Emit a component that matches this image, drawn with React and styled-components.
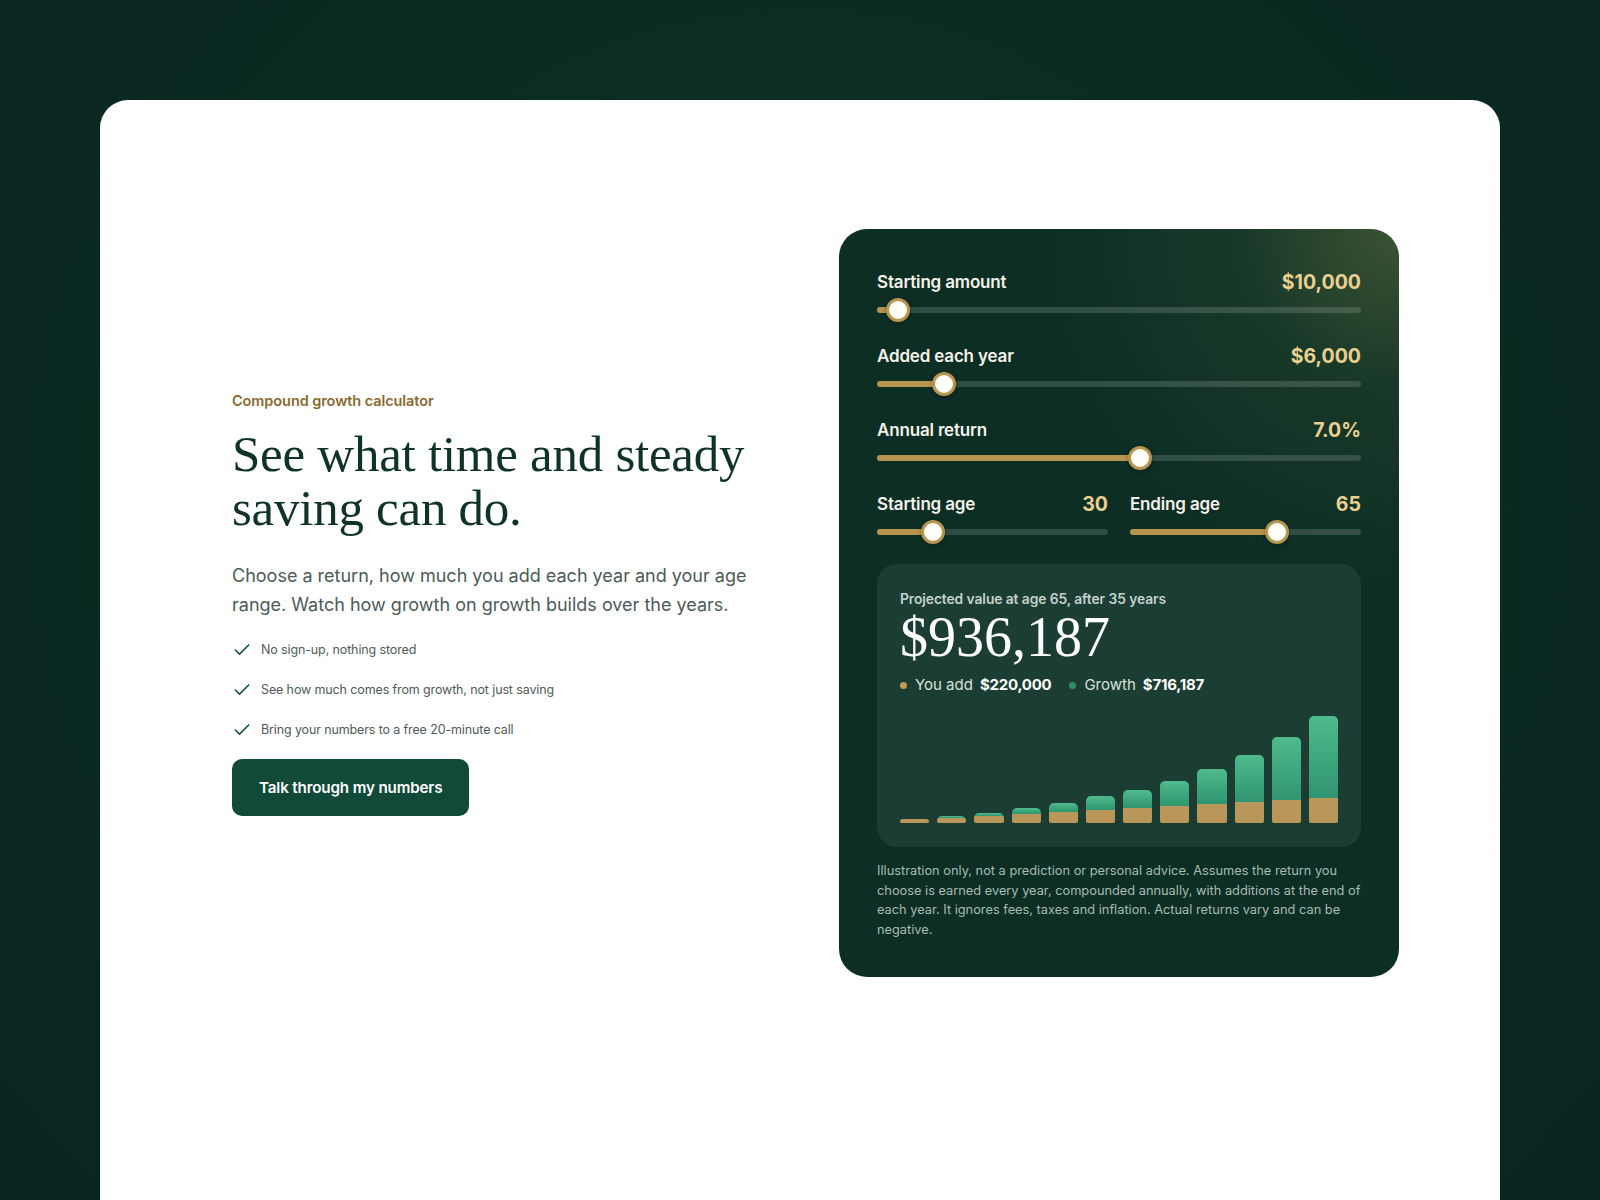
import React, { useState } from "react";
import styled, { createGlobalStyle } from "styled-components";
import { Check } from "lucide-react";

const GlobalStyle = createGlobalStyle`
  * { box-sizing: border-box; }
  html, body { margin: 0; padding: 0; }
  body {
    background: radial-gradient(ellipse at 50% 40%, #0e3027 0%, #0b2a22 60%, #092520 100%);
    min-height: 100vh;
    font-family: Inter, "Noto Sans", sans-serif;
    -webkit-font-smoothing: antialiased;
  }
`;

const Page = styled.div`
  padding: 100px 100px 0;
  min-height: 100vh;
  overflow: hidden;
`;

const Card = styled.main`
  background: #ffffff;
  border-radius: 28px 28px 0 0;
  min-height: 1160px;
  padding: 129px 0 0 132px;
  display: grid;
  grid-template-columns: 520px 560px;
  column-gap: 87px;
  align-items: center;
  align-content: start;
`;

const Intro = styled.section`
  display: flex;
  flex-direction: column;
`;

const Eyebrow = styled.div`
  font-size: 14.5px;
  line-height: 20px;
  font-weight: 600;
  color: #8a6a2f;
  letter-spacing: -0.005em;
`;

const Headline = styled.h1`
  margin: 16px 0 0;
  font-family: "Liberation Serif", "DejaVu Serif", serif;
  font-weight: 400;
  font-size: 51px;
  line-height: 54px;
  color: #0f3328;
  letter-spacing: -0.005em;
`;

const Lead = styled.p`
  margin: 26px 0 0;
  font-size: 18px;
  line-height: 29px;
  color: #4b5b56;
`;

const Perks = styled.ul`
  list-style: none;
  margin: 21px 0 0;
  padding: 0;
  display: flex;
  flex-direction: column;
  gap: 20px;
`;

const Perk = styled.li`
  display: flex;
  align-items: center;
  gap: 9px;
  font-size: 12.5px;
  line-height: 20px;
  color: #4f5b57;
  letter-spacing: -0.01em;
  svg { color: #1a5540; flex: none; }
`;

const CallButton = styled.button`
  margin-top: 19px;
  align-self: flex-start;
  height: 57px;
  padding: 0 27px;
  border: 0;
  border-radius: 10px;
  background: #124a3a;
  color: #ffffff;
  font-family: inherit;
  font-size: 15.2px;
  font-weight: 600;
  letter-spacing: -0.01em;
  cursor: pointer;
`;

const Panel = styled.section`
  background:
    radial-gradient(circle at 100% 0%, rgba(88, 106, 60, 0.62) 0%, rgba(52, 80, 50, 0.3) 17%, rgba(12, 46, 36, 0) 38%),
    #0c2e24;
  border-radius: 28px;
  padding: 41px 38px 38px;
  display: flex;
  flex-direction: column;
`;

const Fields = styled.div`
  display: flex;
  flex-direction: column;
  gap: 22px;
`;

const FieldPair = styled.div`
  display: grid;
  grid-template-columns: 1fr 1fr;
  column-gap: 22px;
`;

const Field = styled.label`
  display: flex;
  flex-direction: column;
  gap: 4px;
`;

const FieldHead = styled.div`
  display: flex;
  justify-content: space-between;
  align-items: center;
  line-height: 24px;
`;

const FieldName = styled.span`
  font-size: 17px;
  font-weight: 600;
  color: #f5f2ea;
  letter-spacing: -0.01em;
`;

const FieldValue = styled.span`
  font-size: 19.5px;
  font-weight: 700;
  color: #ead08f;
`;

const Range = styled.input.attrs({ type: "range" })`
  -webkit-appearance: none;
  appearance: none;
  width: 100%;
  height: 24px;
  margin: 0;
  background: transparent;
  cursor: pointer;

  &::-webkit-slider-runnable-track {
    height: 6px;
    border-radius: 3px;
    background: linear-gradient(
      to right,
      #b8954f 0,
      #b8954f calc(12px + (100% - 24px) * var(--pct)),
      rgba(255, 255, 255, 0.15) calc(12px + (100% - 24px) * var(--pct)),
      rgba(255, 255, 255, 0.15) 100%
    );
  }

  &::-webkit-slider-thumb {
    -webkit-appearance: none;
    appearance: none;
    width: 24px;
    height: 24px;
    margin-top: -9px;
    border-radius: 50%;
    background: #fffdf7;
    border: 3px solid #b8954f;
    box-shadow: 0 1px 4px rgba(0, 0, 0, 0.35);
  }
`;

const Result = styled.div`
  margin-top: 20px;
  background: #1c3d33;
  border-radius: 20px;
  padding: 26px 23px 24px;
  display: flex;
  flex-direction: column;
`;

const ResultCaption = styled.div`
  font-size: 13.8px;
  line-height: 18px;
  font-weight: 600;
  color: #c3d2cb;
  letter-spacing: -0.005em;
`;

const ResultTotal = styled.div`
  margin-top: 1px;
  font-family: "Liberation Serif", "DejaVu Serif", serif;
  font-size: 56px;
  line-height: 56px;
  color: #ffffff;
`;

const Legend = styled.div`
  margin-top: 10px;
  display: flex;
  align-items: center;
  gap: 18px;
  font-size: 15px;
  line-height: 20px;
`;

const LegendItem = styled.span`
  display: inline-flex;
  align-items: center;
  gap: 7px;
  color: #d7e1dc;
  b { color: #ffffff; font-weight: 700; letter-spacing: -0.015em; }
`;

const Dot = styled.i`
  width: 7px;
  height: 7px;
  border-radius: 50%;
  background: ${(p) => p.$color};
  margin-right: 1px;
`;

const Chart = styled.div`
  margin-top: 21px;
  height: 107px;
  display: flex;
  align-items: flex-end;
  gap: 8px;
`;

const Bar = styled.div`
  flex: 1;
  display: flex;
  flex-direction: column;
  border-radius: 5px 5px 2px 2px;
  overflow: hidden;
  min-height: 4px;
`;

const Growth = styled.div`
  background: linear-gradient(to bottom, #4fbb8c, #2f9570);
`;

const Saved = styled.div`
  flex: 1;
  background: #b9975a;
`;

const Disclaimer = styled.p`
  margin: 14px 0 0;
  font-size: 12.8px;
  line-height: 19.5px;
  color: #a7bcb3;
`;

const money = (n) => "$" + Math.round(n).toLocaleString("en-US");

function project(start, yearly, rate, years) {
  const g = Math.pow(1 + rate / 100, years);
  const total = rate === 0 ? start + yearly * years : start * g + yearly * ((g - 1) / (rate / 100));
  return { total, added: start + yearly * years };
}

function Slider({ name, display, min, max, step, value, onChange }) {
  const pct = (value - min) / (max - min);
  return (
    <Field>
      <FieldHead>
        <FieldName>{name}</FieldName>
        <FieldValue>{display}</FieldValue>
      </FieldHead>
      <Range
        min={min}
        max={max}
        step={step}
        value={value}
        style={{ "--pct": pct }}
        onChange={(e) => onChange(Number(e.target.value))}
      />
    </Field>
  );
}

const perks = [
  "No sign-up, nothing stored",
  "See how much comes from growth, not just saving",
  "Bring your numbers to a free 20-minute call",
];

export default function App() {
  const [start, setStart] = useState(10000);
  const [yearly, setYearly] = useState(6000);
  const [rate, setRate] = useState(7);
  const [fromAge, setFromAge] = useState(30);
  const [toAge, setToAge] = useState(65);

  const years = Math.max(toAge - fromAge, 1);
  const final = project(start, yearly, rate, years);

  // twelve evenly spaced checkpoints, the last one is the ending age
  const points = Array.from({ length: 12 }, (_, i) => {
    const y = Math.round((years * (i + 1)) / 12);
    return project(start, yearly, rate, y);
  });

  return (
    <>
      <GlobalStyle />
      <Page>
        <Card>
          <Intro>
            <Eyebrow>Compound growth calculator</Eyebrow>
            <Headline>See what time and steady saving can do.</Headline>
            <Lead>
              Choose a return, how much you add each year and your age range. Watch how growth on
              growth builds over the years.
            </Lead>
            <Perks>
              {perks.map((p) => (
                <Perk key={p}>
                  <Check size={20} strokeWidth={2} />
                  {p}
                </Perk>
              ))}
            </Perks>
            <CallButton>Talk through my numbers</CallButton>
          </Intro>

          <Panel>
            <Fields>
              <Slider
                name="Starting amount"
                display={money(start)}
                min={0}
                max={500000}
                step={1000}
                value={start}
                onChange={setStart}
              />
              <Slider
                name="Added each year"
                display={money(yearly)}
                min={0}
                max={50000}
                step={500}
                value={yearly}
                onChange={setYearly}
              />
              <Slider
                name="Annual return"
                display={rate.toFixed(1) + "%"}
                min={1}
                max={12}
                step={0.5}
                value={rate}
                onChange={setRate}
              />
              <FieldPair>
                <Slider
                  name="Starting age"
                  display={fromAge}
                  min={18}
                  max={75}
                  step={1}
                  value={fromAge}
                  onChange={setFromAge}
                />
                <Slider
                  name="Ending age"
                  display={toAge}
                  min={18}
                  max={90}
                  step={1}
                  value={toAge}
                  onChange={setToAge}
                />
              </FieldPair>
            </Fields>

            <Result>
              <ResultCaption>
                Projected value at age {toAge}, after {years} years
              </ResultCaption>
              <ResultTotal>{money(final.total)}</ResultTotal>
              <Legend>
                <LegendItem>
                  <Dot $color="#c49a55" />
                  You add <b>{money(final.added)}</b>
                </LegendItem>
                <LegendItem>
                  <Dot $color="#2f8f68" />
                  Growth <b>{money(final.total - final.added)}</b>
                </LegendItem>
              </Legend>
              <Chart>
                {points.map((pt, i) => {
                  const h = (pt.total / final.total) * 100;
                  const saved = (pt.added / pt.total) * 100;
                  return (
                    <Bar key={i} style={{ height: h + "%" }}>
                      <Growth style={{ height: 100 - saved + "%" }} />
                      <Saved />
                    </Bar>
                  );
                })}
              </Chart>
            </Result>

            <Disclaimer>
              Illustration only, not a prediction or personal advice. Assumes the return you choose
              is earned every year, compounded annually, with additions at the end of each year. It
              ignores fees, taxes and inflation. Actual returns vary and can be negative.
            </Disclaimer>
          </Panel>
        </Card>
      </Page>
    </>
  );
}
